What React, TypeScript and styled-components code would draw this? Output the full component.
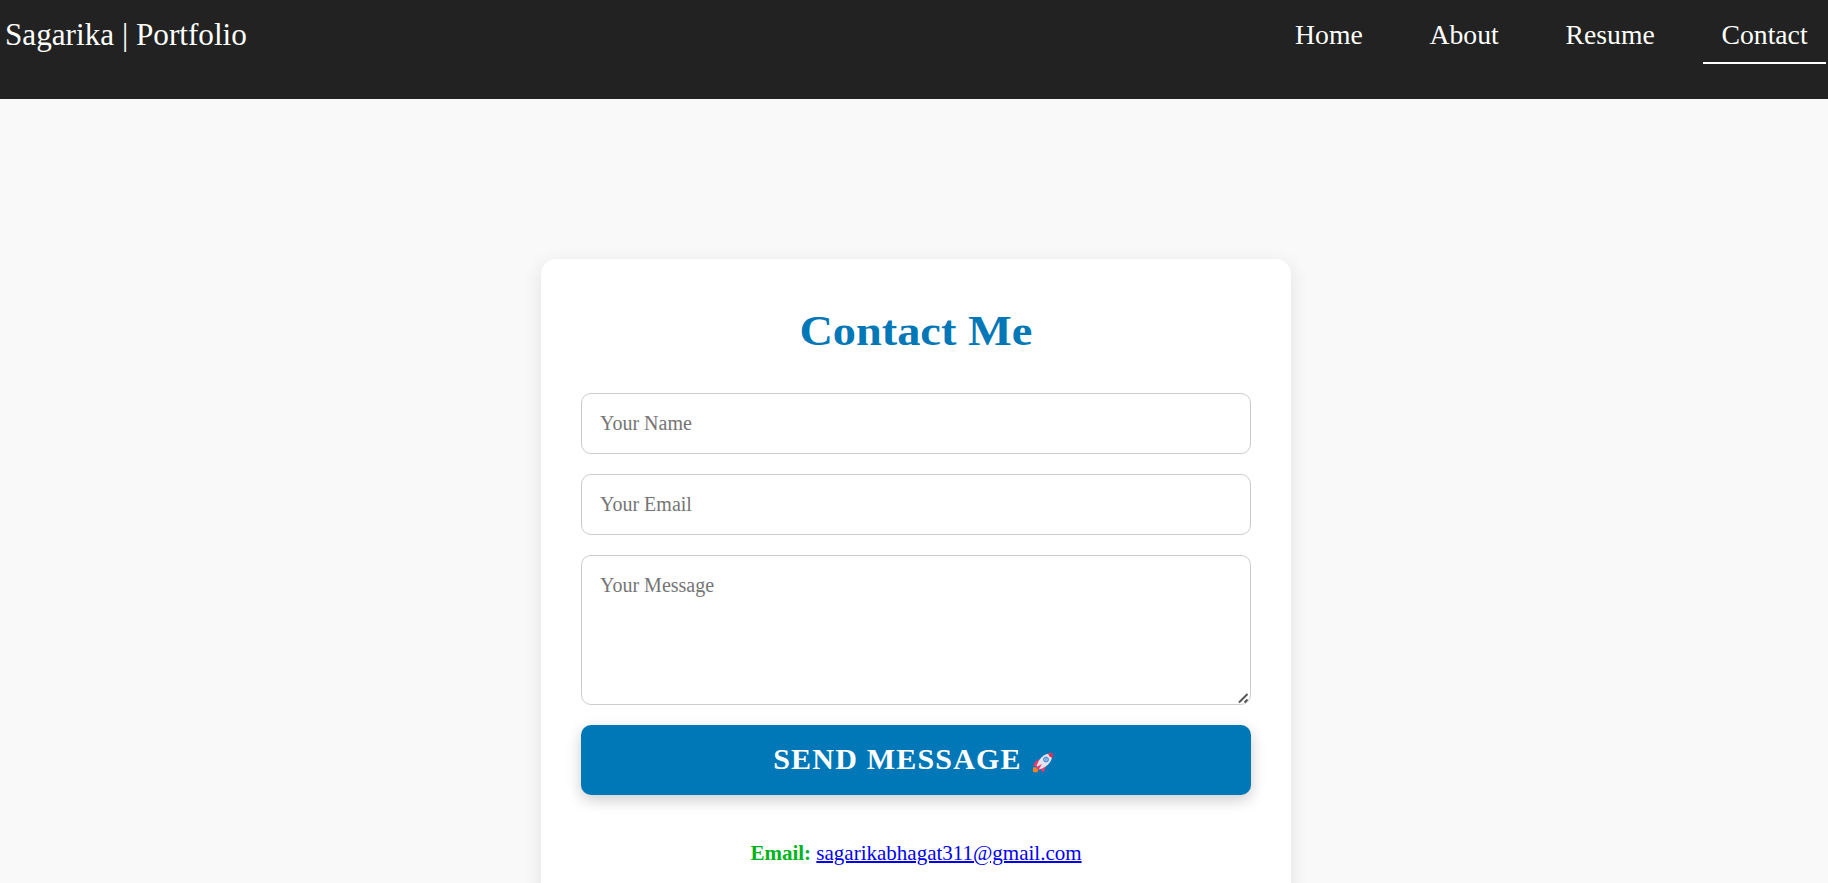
import React from 'react';
import styled, { createGlobalStyle } from 'styled-components';

const GlobalStyle = createGlobalStyle`
  * { box-sizing: border-box; }
  html, body { margin: 0; height: 883px; overflow: hidden; background: #f9f9f9; }
  body { font-family: "Liberation Serif", "Times New Roman", serif; }
`;

const Page = styled.div`
  height: 883px;
  overflow: hidden;
  display: flex;
  flex-direction: column;
  align-items: center;
  background: #f9f9f9;
`;

const Header = styled.header`
  align-self: stretch;
  flex: none;
  height: 99px;
  padding: 0 2px 0 5px;
  display: flex;
  justify-content: space-between;
  align-items: flex-start;
  background: #222;
  color: #fff;
`;

const Brand = styled.div`
  padding-top: 17px;
  font-size: 31.2px;
  line-height: 36px;
  white-space: nowrap;
`;

const Nav = styled.nav`
  display: flex;
  gap: 30px;
`;

const NavLink = styled.a<{ $active?: boolean }>`
  height: 64px;
  padding: 19px 18.4px 0;
  font-size: 27.7px;
  line-height: 32px;
  color: #fff;
  text-decoration: none;
  border-bottom: 2px solid ${(p) => (p.$active ? '#fff' : 'transparent')};
`;

const Card = styled.main`
  flex: none;
  width: 750px;
  height: 720px;
  margin: 160px 0 0 4px;
  padding: 40px;
  background: #fff;
  border-radius: 15px;
  box-shadow: 0 5px 20px rgba(0, 0, 0, 0.1);
`;

const Title = styled.h1`
  margin: 0 0 34px;
  height: 60px;
  padding-top: 8px;
  text-align: center;
  font-size: 42.5px;
  line-height: 48px;
  color: #0077b6;
`;

const WideText = styled.span`
  display: inline-block;
  transform: scaleX(1.09);
`;

const Form = styled.form`
  display: flex;
  flex-direction: column;
  gap: 20px;
`;

const Input = styled.input`
  height: 61px;
  padding: 17px 18px 18px;
  font: 20px "Liberation Serif", serif;
  border: 1px solid #ccc;
  border-radius: 10px;
  background: #fff;
  outline: none;
  &::placeholder { color: #757575; }
`;

const MessageField = styled.div`
  position: relative;
  display: flex;
`;

const Message = styled.textarea`
  flex: 1;
  height: 150px;
  padding: 18px;
  font: 20px "Liberation Serif", serif;
  border: 1px solid #ccc;
  border-radius: 10px;
  background: #fff;
  outline: none;
  resize: none;
  &::placeholder { color: #757575; }
`;

const Grip = styled.svg`
  position: absolute;
  right: 2px;
  bottom: 1px;
  width: 11px;
  height: 11px;
  pointer-events: none;
`;

const SendButton = styled.button`
  height: 70px;
  padding: 0 3px 2px 0;
  display: flex;
  align-items: center;
  justify-content: center;
  gap: 10px;
  border: 0;
  border-radius: 10px;
  background: #0077b6;
  color: #fff;
  font: bold 30px "Liberation Serif", serif;
  letter-spacing: 1.2px;
  box-shadow: 0 5px 15px rgba(0, 0, 0, 0.2);
`;

const RocketIcon = styled.svg`
  width: 22px;
  height: 22px;
  margin: 7px 2px 0 0;
`;

const EmailLine = styled.p`
  margin: 46px 0 0;
  text-align: center;
  font-size: 21px;
  line-height: 24px;
  color: #222;
`;

const Label = styled.strong`
  color: #00b41e;
`;

const MailLink = styled.a`
  color: #0000ee;
  text-decoration-thickness: 2px;
`;

const links = ['Home', 'About', 'Resume', 'Contact'];

export default function App() {
  return (
    <Page>
      <GlobalStyle />
      <Header>
        <Brand>Sagarika | Portfolio</Brand>
        <Nav>
          {links.map((name) => (
            <NavLink key={name} href="#" $active={name === 'Contact'}>{name}</NavLink>
          ))}
        </Nav>
      </Header>
      <Card>
        <Title><WideText>Contact Me</WideText></Title>
        <Form>
          <Input placeholder="Your Name" />
          <Input placeholder="Your Email" />
          <MessageField>
            <Message placeholder="Your Message" />
            <Grip viewBox="0 0 11 11" aria-hidden="true">
              <path d="M1 9.5 L9.5 1 M6.5 9.5 L9.5 6.5" stroke="#555" strokeWidth="2" fill="none" />
            </Grip>
          </MessageField>
          <SendButton type="button">
            SEND MESSAGE
            <RocketIcon viewBox="0 0 22 22" aria-hidden="true">
              <path d="M1 15.5 L5 15 L6.5 18 L5 20.5 L1 20Z" fill="#f7831e" />
              <path d="M8 7 L4 9 L1 14 L6 14Z M14.500 13 L12.500 18 L11 21 L8 16Z" fill="#f0386b" />
              <path d="M20 1.500 C14 1 8 4 4.500 14 L7.500 17.500 C17 14 21 8 20 1.500Z" fill="#e3e3ee" />
              <path d="M21 1 L16 1.500 Q17 5 20.500 6Z" fill="#e8274b" />
              <circle cx="14" cy="7.500" r="2.500" fill="#7db4ea" stroke="#4a8fd0" />
              <path d="M10 12 L3.500 15.500 L6.500 18Z" fill="#f0386b" />
            </RocketIcon>
          </SendButton>
        </Form>
        <EmailLine>
          <Label>Email:</Label> <MailLink href="#">sagarikabhagat311@gmail.com</MailLink>
        </EmailLine>
      </Card>
    </Page>
  );
}
